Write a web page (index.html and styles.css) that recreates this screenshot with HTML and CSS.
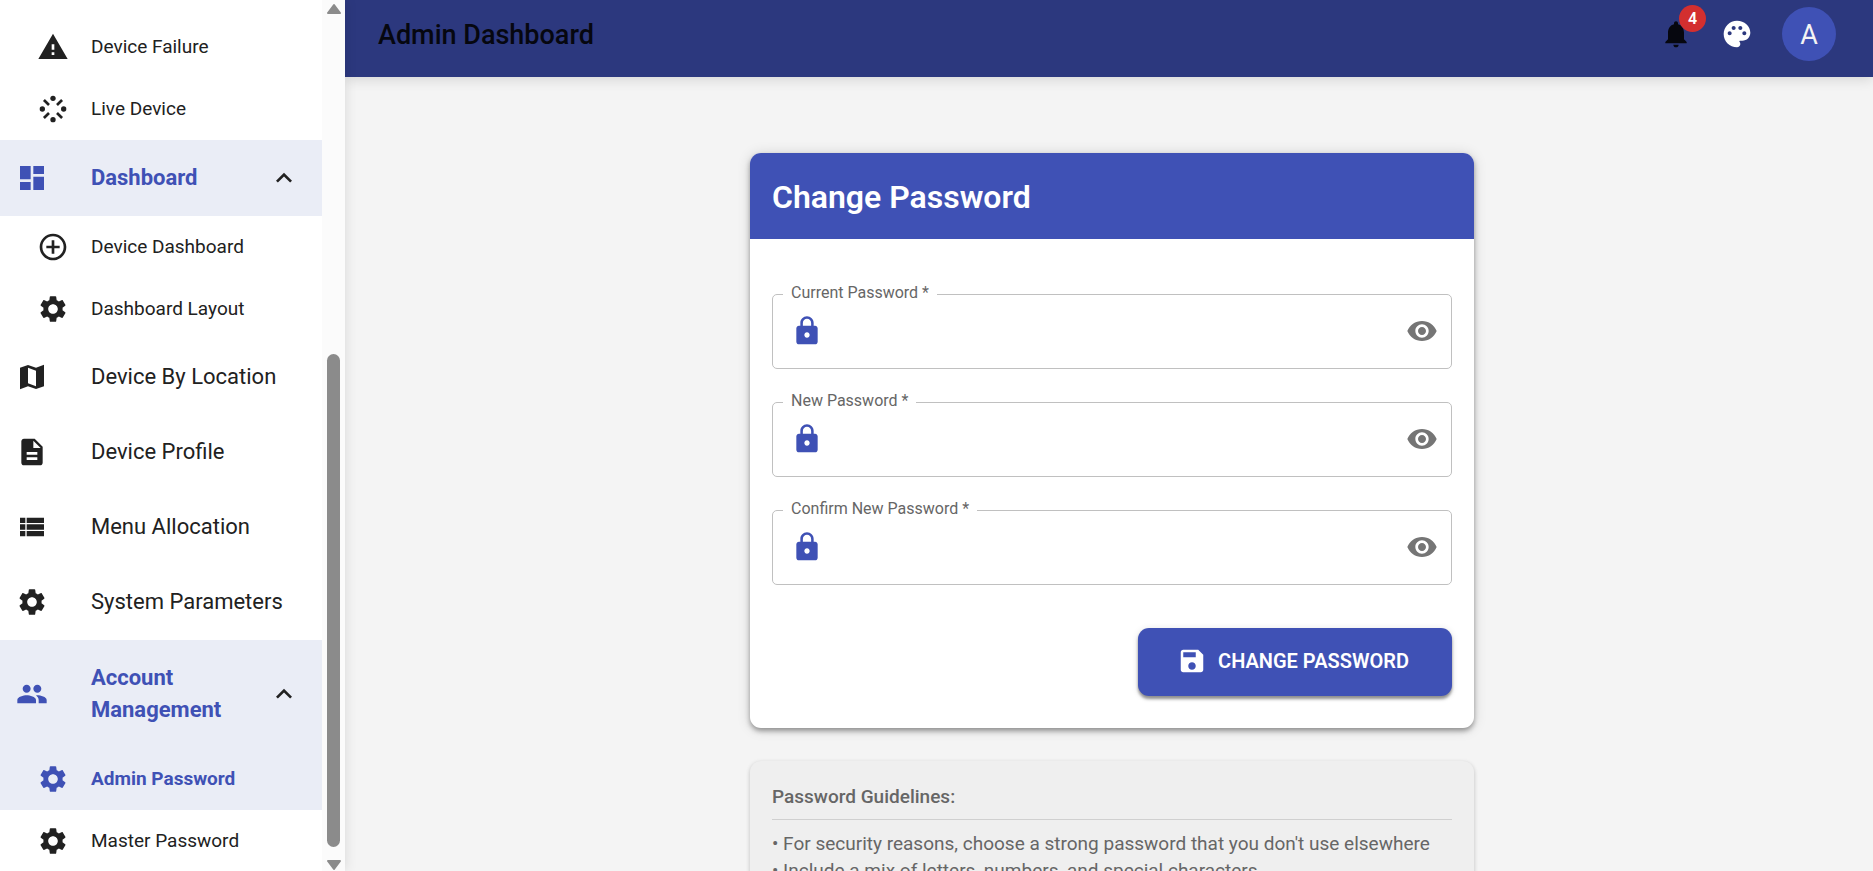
FILE: index.html
```
<!DOCTYPE html>
<html lang="en">

<head>
    <meta charset="utf-8">
    <title>Admin Dashboard</title>
    <link rel="stylesheet" href="styles.css">
</head>

<body>
    <svg class="sprite" aria-hidden="true">
        <symbol id="settings" viewBox="0 0 24 24"><path d="M19.14 12.94c.04-.3.06-.61.06-.94 0-.32-.02-.64-.07-.94l2.03-1.58c.18-.14.23-.41.12-.61l-1.92-3.32c-.12-.22-.37-.29-.59-.22l-2.39.96c-.5-.38-1.03-.7-1.62-.94l-.36-2.54c-.04-.24-.24-.41-.48-.41h-3.84c-.24 0-.43.17-.47.41l-.36 2.54c-.59.24-1.13.57-1.62.94l-2.39-.96c-.22-.08-.47 0-.59.22L2.74 8.87c-.12.21-.08.47.12.61l2.03 1.58c-.05.3-.09.63-.09.94s.02.64.07.94l-2.03 1.58c-.18.14-.23.41-.12.61l1.92 3.32c.12.22.37.29.59.22l2.39-.96c.5.38 1.03.7 1.62.94l.36 2.54c.05.24.24.41.48.41h3.84c.24 0 .44-.17.47-.41l.36-2.54c.59-.24 1.13-.56 1.62-.94l2.39.96c.22.08.47 0 .59-.22l1.92-3.32c.12-.22.07-.47-.12-.61l-2.01-1.58zM12 15.6c-1.98 0-3.6-1.62-3.6-3.6s1.62-3.6 3.6-3.6 3.6 1.62 3.6 3.6-1.62 3.6-3.6 3.6z"/></symbol>
        <symbol id="less" viewBox="0 0 24 24"><path d="M12 8l-6 6 1.41 1.41L12 10.83l4.59 4.58L18 14z"/></symbol>
        <symbol id="lock" viewBox="0 0 24 24"><path d="M18 8h-1V6c0-2.76-2.24-5-5-5S7 3.24 7 6v2H6c-1.1 0-2 .9-2 2v10c0 1.1.9 2 2 2h12c1.1 0 2-.9 2-2V10c0-1.1-.9-2-2-2zm-6 9c-1.1 0-2-.9-2-2s.9-2 2-2 2 .9 2 2-.9 2-2 2zm3.1-9H8.9V6c0-1.71 1.39-3.1 3.1-3.1s3.1 1.39 3.1 3.1v2z"/></symbol>
        <symbol id="eye" viewBox="0 0 24 24"><path d="M12 4.5C7 4.5 2.73 7.61 1 12c1.73 4.39 6 7.5 11 7.5s9.27-3.11 11-7.5c-1.73-4.39-6-7.5-11-7.5zM12 17c-2.76 0-5-2.24-5-5s2.24-5 5-5 5 2.24 5 5-2.24 5-5 5zm0-8c-1.66 0-3 1.34-3 3s1.34 3 3 3 3-1.34 3-3-1.34-3-3-3z"/></symbol>
    </svg>

    <aside class="sidebar">
        <nav class="menu">
            <a class="item sub" href="#failure">
                <svg class="icon" viewBox="0 0 24 24"><path d="M1 21h22L12 2 1 21zm12-3h-2v-2h2v2zm0-4h-2v-4h2v4z"/></svg>
                <span>Device Failure</span>
            </a>
            <a class="item sub" href="#live">
                <svg class="icon" viewBox="0 0 24 24">
                    <circle cx="12" cy="4" r="2"/><circle cx="20" cy="12" r="2"/><circle cx="12" cy="20" r="2"/><circle cx="4" cy="12" r="2"/>
                    <path d="M5.2 5.2L9 9M18.8 5.2L15 9M5.2 18.8L9 15M18.8 18.8L15 15" stroke="currentColor" stroke-width="2"/>
                </svg>
                <span>Live Device</span>
            </a>
            <button class="item group active" type="button" aria-expanded="true">
                <svg class="icon" viewBox="0 0 24 24"><path d="M3 13h8V3H3v10zm0 8h8v-6H3v6zm10 0h8V11h-8v10zm0-18v6h8V3h-8z"/></svg>
                <span>Dashboard</span>
                <svg class="icon arrow"><use href="#less"/></svg>
            </button>
            <a class="item sub" href="#device-dashboard">
                <svg class="icon" viewBox="0 0 24 24"><path d="M13 7h-2v4H7v2h4v4h2v-4h4v-2h-4V7zm-1-5C6.48 2 2 6.48 2 12s4.48 10 10 10 10-4.48 10-10S17.52 2 12 2zm0 18c-4.41 0-8-3.59-8-8s3.59-8 8-8 8 3.59 8 8-3.59 8-8 8z"/></svg>
                <span>Device Dashboard</span>
            </a>
            <a class="item sub" href="#layout">
                <svg class="icon"><use href="#settings"/></svg>
                <span>Dashboard Layout</span>
            </a>
            <a class="item" href="#location">
                <svg class="icon" viewBox="0 0 24 24"><path d="M15 5.1L9 3 3 5.02v16.2l6-2.33 6 2.1 6-2.02V2.77L15 5.1zm0 13.79l-6-2.11V5.11l6 2.11v11.67z"/></svg>
                <span>Device By Location</span>
            </a>
            <a class="item" href="#profile">
                <svg class="icon" viewBox="0 0 24 24"><path d="M14 2H6c-1.1 0-1.99.9-1.99 2L4 20c0 1.1.89 2 1.99 2H18c1.1 0 2-.9 2-2V8l-6-6zm2 16H8v-2h8v2zm0-4H8v-2h8v2zm-3-5V3.5L18.5 9H13z"/></svg>
                <span>Device Profile</span>
            </a>
            <a class="item" href="#menu">
                <svg class="icon" viewBox="0 0 24 24"><path d="M3 14h4v-4H3v4zm0 5h4v-4H3v4zM3 9h4V5H3v4zm5 5h13v-4H8v4zm0 5h13v-4H8v4zM8 5v4h13V5H8z"/></svg>
                <span>Menu Allocation</span>
            </a>
            <a class="item" href="#system">
                <svg class="icon"><use href="#settings"/></svg>
                <span>System Parameters</span>
            </a>
            <button class="item group active" type="button" aria-expanded="true">
                <svg class="icon" viewBox="0 0 24 24"><path d="M16 11c1.66 0 2.99-1.34 2.99-3S17.66 5 16 5c-1.66 0-3 1.34-3 3s1.34 3 3 3zm-8 0c1.66 0 2.99-1.34 2.99-3S9.66 5 8 5C6.34 5 5 6.34 5 8s1.34 3 3 3zm0 2c-2.33 0-7 1.17-7 3.5V19h14v-2.5c0-2.33-4.67-3.5-7-3.5zm8 0c-.29 0-.62.02-.97.05 1.16.84 1.97 1.97 1.97 3.45V19h6v-2.5c0-2.33-4.67-3.5-7-3.5z"/></svg>
                <span>Account Management</span>
                <svg class="icon arrow"><use href="#less"/></svg>
            </button>
            <a class="item sub active" href="#admin-password">
                <svg class="icon"><use href="#settings"/></svg>
                <span>Admin Password</span>
            </a>
            <a class="item sub" href="#master-password">
                <svg class="icon"><use href="#settings"/></svg>
                <span>Master Password</span>
            </a>
        </nav>
        <div class="scrollbar" aria-hidden="true">
            <svg class="scrollArrow" viewBox="0 0 16 12"><path d="M8 2L14 10H2z"/></svg>
            <div class="thumb"></div>
            <svg class="scrollArrow" viewBox="0 0 16 12"><path d="M8 10L14 2H2z"/></svg>
        </div>
    </aside>

    <div class="page">
        <header class="topbar">
            <h1>Admin Dashboard</h1>
            <button class="iconButton bell" type="button" aria-label="Notifications">
                <svg class="icon" viewBox="0 0 24 24"><path d="M12 22c1.1 0 2-.9 2-2h-4c0 1.1.89 2 2 2zm6-6v-5c0-3.07-1.64-5.64-4.5-6.32V4c0-.83-.67-1.5-1.5-1.5s-1.5.67-1.5 1.5v.68C7.63 5.36 6 7.92 6 11v5l-2 2v1h16v-1l-2-2z"/></svg>
                <span class="badge">4</span>
            </button>
            <button class="iconButton" type="button" aria-label="Theme">
                <svg class="icon" viewBox="0 0 24 24"><path d="M12 2C6.49 2 2 6.49 2 12s4.49 10 10 10c1.38 0 2.5-1.12 2.5-2.5 0-.61-.23-1.2-.64-1.67-.08-.1-.13-.21-.13-.33 0-.28.22-.5.5-.5H16c3.31 0 6-2.69 6-6 0-4.96-4.49-9-10-9zm-5.5 11c-.83 0-1.5-.67-1.5-1.5S5.67 10 6.5 10s1.5.67 1.5 1.5S7.33 13 6.5 13zm3-4C8.67 9 8 8.33 8 7.5S8.67 6 9.5 6s1.5.67 1.5 1.5S10.33 9 9.5 9zm5 0c-.83 0-1.5-.67-1.5-1.5S13.67 6 14.5 6s1.5.67 1.5 1.5S15.33 9 14.5 9zm3 4c-.83 0-1.5-.67-1.5-1.5s.67-1.5 1.5-1.5 1.5.67 1.5 1.5-.67 1.5-1.5 1.5z"/></svg>
            </button>
            <button class="avatar" type="button" aria-label="Account">A</button>
        </header>

        <main class="content">
            <section class="card">
                <h2>Change Password</h2>
                <form class="form">
                    <div class="field">
                        <label for="current">Current Password *</label>
                        <svg class="icon lock"><use href="#lock"/></svg>
                        <input id="current" type="password" required>
                        <button class="iconButton eye" type="button" aria-label="Show current password"><svg class="icon"><use href="#eye"/></svg></button>
                    </div>
                    <div class="field">
                        <label for="new">New Password *</label>
                        <svg class="icon lock"><use href="#lock"/></svg>
                        <input id="new" type="password" required>
                        <button class="iconButton eye" type="button" aria-label="Show new password"><svg class="icon"><use href="#eye"/></svg></button>
                    </div>
                    <div class="field">
                        <label for="confirm">Confirm New Password *</label>
                        <svg class="icon lock"><use href="#lock"/></svg>
                        <input id="confirm" type="password" required>
                        <button class="iconButton eye" type="button" aria-label="Show confirmed password"><svg class="icon"><use href="#eye"/></svg></button>
                    </div>
                    <button class="submit" type="submit">
                        <svg viewBox="0 0 24 24"><path d="M17 3H5c-1.11 0-2 .9-2 2v14c0 1.1.89 2 2 2h14c1.1 0 2-.9 2-2V7l-4-4zm-5 16c-1.66 0-3-1.34-3-3s1.34-3 3-3 3 1.34 3 3-1.34 3-3 3zm3-10H5V5h10v4z"/></svg>
                        CHANGE PASSWORD
                    </button>
                </form>
            </section>

            <section class="guidelines">
                <h3>Password Guidelines:</h3>
                <p>• For security reasons, choose a strong password that you don't use elsewhere</p>
                <p>• Include a mix of letters, numbers, and special characters</p>
            </section>
        </main>
    </div>
</body>

</html>
```

FILE: styles.css
```
* {
    box-sizing: border-box;
}

body {
    margin: 0;
    display: flex;
    height: 100vh;
    overflow: hidden;
    font-family: Roboto, "Liberation Sans", sans-serif;
    color: #212121;
    background: #f4f4f4;
}

button {
    font-family: inherit;
    border: none;
    background: none;
    padding: 0;
    cursor: pointer;
}

h1, h2, h3, p {
    margin: 0;
    font-weight: 500;
}

.sprite {
    display: none;
}

.icon {
    width: 32px;
    height: 32px;
    flex: none;
    display: block;
    fill: currentColor;
}

/* sidebar */
.sidebar {
    display: flex;
    flex: none;
    width: 345px;
    background: white;
    box-shadow: 0 0 12px rgba(0, 0, 0, 0.12);
    z-index: 1;
}

.menu {
    flex: 1;
    padding-top: 16px;
    overflow: hidden;
}

.item {
    display: flex;
    align-items: center;
    width: 100%;
    padding: 21px 22px 22px 16px;
    gap: 43px;
    font-size: 22px;
    line-height: 32px;
    text-align: left;
    text-decoration: none;
    color: #212121;
}

.item span {
    flex: 1;
}

.sub {
    padding: 15px 22px 15px 37px;
    gap: 22px;
    font-size: 19px;
}

.group {
    padding-top: 22px;
}

.active {
    background: #eaedf6;
    color: #3f51b5;
    font-weight: 700;
}

.arrow {
    color: #212121;
}

.scrollbar {
    display: flex;
    flex-direction: column;
    align-items: center;
    width: 23px;
    padding-top: 3px;
    background: #fbfbfb;
}

.scrollArrow {
    width: 16px;
    height: 12px;
    fill: #8b8b8b;
    stroke: #8b8b8b;
    stroke-width: 2;
    stroke-linejoin: round;
}

.thumb {
    width: 13px;
    height: 56.8%;
    margin-top: auto;
    margin-bottom: 12px;
    border-radius: 7px;
    background: #8b8b8b;
}

/* top bar */
.page {
    flex: 1;
    min-width: 0;
}

.topbar {
    display: flex;
    align-items: center;
    height: 77px;
    padding: 0 37px 9px 33px;
    background: #2c387e;
    box-shadow: 0 3px 12px rgba(0, 0, 0, 0.12);
}

.topbar h1 {
    flex: 1;
    padding-top: 2px;
    font-size: 27px;
    color: #06070f;
}

.iconButton {
    position: relative;
    color: white;
}

.bell {
    margin-right: 29px;
    color: #06070f;
}

.badge {
    position: absolute;
    top: -13px;
    right: -14px;
    width: 27px;
    line-height: 27px;
    border-radius: 50%;
    background: #d32f2f;
    color: white;
    font-size: 16px;
    font-weight: 600;
}

.avatar {
    width: 54px;
    height: 54px;
    margin-left: 29px;
    padding-top: 2px;
    border-radius: 50%;
    background: #3f51b5;
    color: #f4f4f4;
    font-size: 27px;
}

/* content */
.content {
    padding: 76px 0 0 6px;
}

.card {
    max-width: 724px;
    margin: 0 auto 33px;
    border-radius: 11px;
    background: white;
    overflow: hidden;
    box-shadow: 0 3px 5px rgba(0, 0, 0, 0.35), 0 1px 14px rgba(0, 0, 0, 0.14);
}

.card h2 {
    padding: 23px 22px 21px;
    font-size: 32px;
    font-weight: 600;
    line-height: 42px;
    background: #3f51b5;
    color: white;
}

.form {
    display: flex;
    flex-direction: column;
    gap: 33px;
    padding: 55px 22px 32px;
}

.field {
    display: flex;
    align-items: center;
    position: relative;
    height: 75px;
    padding: 0 13px 2px 18px;
    border: 1px solid #c0c0c0;
    border-radius: 5px;
}

.field label {
    position: absolute;
    top: -12px;
    left: 10px;
    padding: 0 8px;
    font-size: 16px;
    line-height: 20px;
    background: white;
    color: #666;
}

.field input {
    flex: 1;
    min-width: 0;
    height: 32px;
    margin: 0 12px;
    border: none;
    outline: none;
    font-family: inherit;
    font-size: 20px;
}

.lock {
    color: #3f51b5;
}

.eye {
    color: #757575;
}

.submit {
    display: flex;
    align-items: center;
    align-self: flex-end;
    gap: 11px;
    height: 68px;
    margin-top: 10px;
    padding: 0 43px 2px 39px;
    border-radius: 11px;
    background: #3f51b5;
    color: white;
    font-size: 20px;
    font-weight: 600;
    box-shadow: 0 3px 3px rgba(0, 0, 0, 0.4), 0 1px 7px rgba(0, 0, 0, 0.12);
}

.submit svg {
    width: 30px;
    height: 30px;
    fill: currentColor;
}

.guidelines {
    max-width: 724px;
    margin: 0 auto;
    padding: 22px;
    border-radius: 11px;
    background: #efefef;
    color: #666;
    font-size: 19px;
    line-height: 27px;
    box-shadow: 0 2px 4px rgba(0, 0, 0, 0.15), 0 1px 5px rgba(0, 0, 0, 0.08);
}

.guidelines h3 {
    margin-bottom: 10px;
    padding-bottom: 9px;
    border-bottom: 1px solid #d0d0d0;
    font-size: 19px;
}

.guidelines p {
    font-weight: 400;
}
```
